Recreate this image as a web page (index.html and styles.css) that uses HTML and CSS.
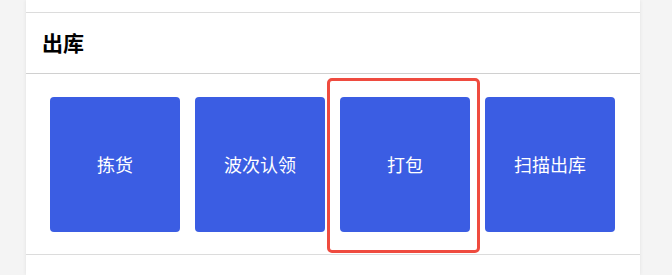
FILE: index.html
```html
<!DOCTYPE html>
<html lang="zh">
<head>
<meta charset="utf-8">
<link rel="stylesheet" href="styles.css">
</head>
<body>
<div class="panel">
  <div class="top"></div>
  <div class="header">出库</div>
  <div class="grid">
    <div class="btn">拣货</div>
    <div class="btn">波次认领</div>
    <div class="btn">打包</div>
    <div class="btn">扫描出库</div>
    <div class="highlight"></div>
  </div>
  <div class="bottom"></div>
</div>
</body>
</html>
```
FILE: styles.css
```css
html, body {
  margin: 0;
  padding: 0;
  background: #f4f4f4;
  font-family: "Noto Sans CJK SC", "Noto Sans", sans-serif;
}
.panel {
  margin-left: 26px;
  width: 614px;
  height: 275px;
  background: #fff;
  box-shadow: 0 0 4px rgba(0, 0, 0, 0.08);
}
.top {
  height: 12px;
  border-bottom: 1px solid #dcdcdc;
}
.header {
  height: 61px;
  box-sizing: border-box;
  display: flex;
  align-items: center;
  padding: 0 0 2px 16px;
  font-size: 21px;
  font-weight: bold;
  color: #000;
  border-bottom: 1px solid #d0d0d0;
}
.grid {
  position: relative;
  display: flex;
  gap: 15px;
  padding: 23px 24px 22px 24px;
  border-bottom: 1px solid #dcdcdc;
}
.btn {
  width: 130px;
  height: 135px;
  box-sizing: border-box;
  padding-bottom: 2px;
  background: #3b5de3;
  border-radius: 4px;
  color: #fff;
  font-size: 18px;
  display: flex;
  align-items: center;
  justify-content: center;
}
.highlight {
  position: absolute;
  left: 301px;
  top: 4px;
  width: 153px;
  height: 175px;
  box-sizing: border-box;
  border: 3px solid #ef4b3f;
  border-radius: 5px;
}
```
